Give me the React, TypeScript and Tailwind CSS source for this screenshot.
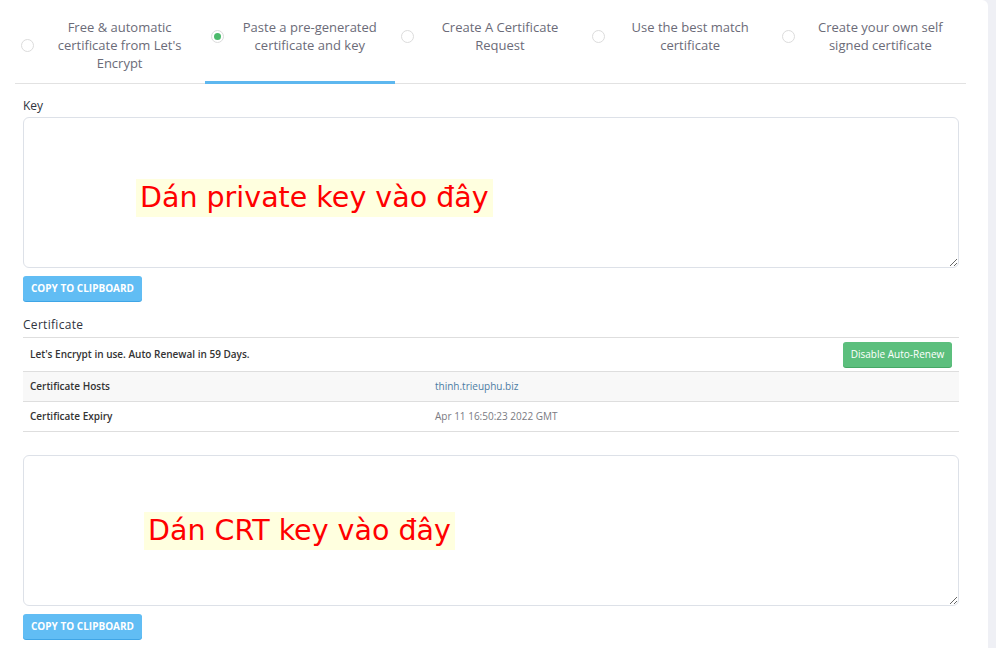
import React from "react";

const tabs = [
  { label: "Free & automatic certificate from Let's Encrypt", w: "max-w-[150px]" },
  { label: "Paste a pre-generated certificate and key", w: "max-w-[150px]", active: true },
  { label: "Create A Certificate Request", w: "max-w-[140px]" },
  { label: "Use the best match certificate", w: "max-w-[140px]" },
  { label: "Create your own self signed certificate", w: "max-w-[150px]" },
];

function Radio({ on }: { on?: boolean }) {
  return (
    <span className="flex h-[13px] w-[13px] shrink-0 items-center justify-center rounded-full border border-[#dcdcdc] bg-white">
      {on && <span className="h-[7px] w-[7px] rounded-full bg-[#4cba6c]" />}
    </span>
  );
}

function PasteBox({ hint, offset }: { hint: string; offset: string }) {
  return (
    <div className="relative h-[151px] w-full">
      <textarea className="block h-full w-full resize-y rounded-[6px] border border-[#dde1e8] bg-white outline-none" />
      <span
        className={`pointer-events-none absolute bg-[#ffffdf] px-[4px] text-[28.5px] leading-[38px] text-[#ff0000] ${offset}`}
        style={{ fontFamily: '"DejaVu Sans", sans-serif' }}
      >
        {hint}
      </span>
    </div>
  );
}

function CopyButton({ className = "" }: { className?: string }) {
  return (
    <button
      className={`block h-[25px] w-[119px] rounded-[3px] bg-[#61bdf4] text-[10px] font-bold text-white shadow-[0_1px_0_#3fa5e6] ${className}`}
    >
      COPY TO CLIPBOARD
    </button>
  );
}

export default function App() {
  return (
    <div
      className="flex h-[648px] w-[996px] overflow-hidden bg-[#eff0f5]"
      style={{ fontFamily: '"Open Sans", "Noto Sans", sans-serif' }}
    >
      <div className="w-[988px] rounded-tr-[6px] bg-white">
        {/* tabs */}
        <div className="ml-[15px] grid w-[951px] grid-cols-5 border-b border-[#e2e2e2]">
          {tabs.map((t) => (
            <div
              key={t.label}
              className={`-mb-px flex h-[84px] items-start border-b-[3px] pl-[6px] pt-[18px] ${
                t.active ? "border-[#5db7ef]" : "border-transparent"
              }`}
            >
              <div className="flex w-full items-center">
                <Radio on={t.active} />
                <div className="flex flex-1 justify-center">
                  <span className={`${t.w} text-center text-[13px] leading-[18px] text-[#6b6b78]`}>
                    {t.label}
                  </span>
                </div>
              </div>
            </div>
          ))}
        </div>

        <div className="pl-[23px] pr-[29px]">
          <div className="mt-[14px] mb-[3px] text-[12px] leading-[16px] text-[#2f3440]">Key</div>
          <PasteBox hint="Dán private key vào đây" offset="left-[113px] top-[62px]" />
          <CopyButton className="mt-[8px]" />

          <div className="mt-[16px] mb-[4px] text-[12px] leading-[16px] tracking-[0.3px] text-[#2f3440]">
            Certificate
          </div>
          <div className="border-t border-[#dedede] text-[10px] text-[#333]">
            <div className="flex h-[34px] items-center justify-between border-b border-[#dedede] pl-[7px] pr-[7px]">
              <span className="font-semibold">Let's Encrypt in use. Auto Renewal in 59 Days.</span>
              <button className="h-[25px] w-[109px] rounded-[3px] bg-[#5cbf7d] text-[10px] text-white shadow-[0_1px_0_#45a865]">
                Disable Auto-Renew
              </button>
            </div>
            <div className="flex h-[30px] items-center border-b border-[#dedede] bg-[#f8f8f8] pl-[7px]">
              <span className="w-[405px] font-semibold">Certificate Hosts</span>
              <span className="text-[#4c7ca3]">thinh.trieuphu.biz</span>
            </div>
            <div className="flex h-[30px] items-center border-b border-[#dedede] pl-[7px]">
              <span className="w-[405px] font-semibold">Certificate Expiry</span>
              <span className="text-[#7a7a82]">Apr 11 16:50:23 2022 GMT</span>
            </div>
          </div>

          <div className="mt-[23px]">
            <PasteBox hint="Dán CRT key vào đây" offset="left-[121px] top-[57px]" />
          </div>
          <CopyButton className="mt-[8px]" />
        </div>
      </div>
    </div>
  );
}
